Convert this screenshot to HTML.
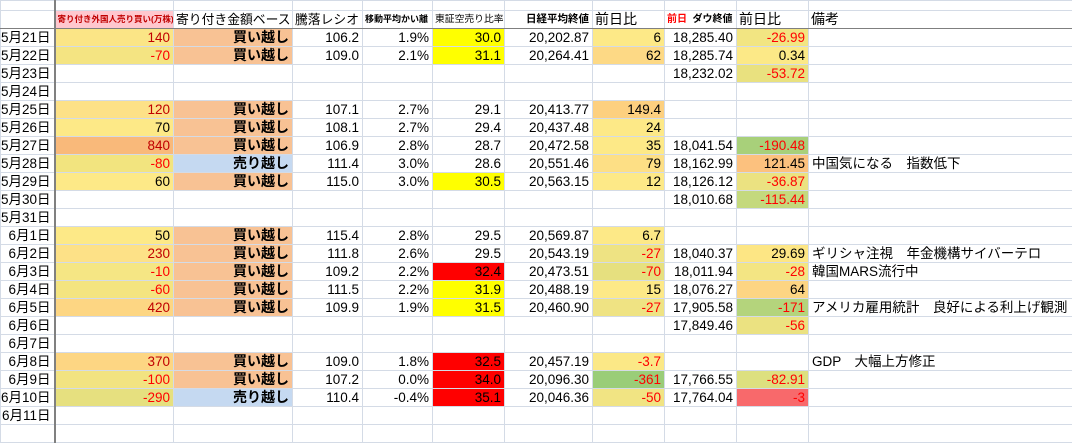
<!DOCTYPE html>
<html><head><meta charset="utf-8"><style>
body{margin:0;width:1072px;height:440px;overflow:hidden;background:#fff;font-family:"Liberation Sans","Noto Sans CJK JP",sans-serif;}
table{border-collapse:collapse;table-layout:fixed;position:absolute;left:0;top:0;width:1072px;}
td{border:1px solid #d4dbe6;padding:0 3px 0 0;height:17px;font-size:13.5px;text-align:right;white-space:nowrap;overflow:hidden;line-height:17px;color:#000;}
tr.t td{height:9px;}
tr.h td{border-bottom:1px solid #7f7f7f;text-align:left;padding:0 0 0 2px;font-size:14px;}
td.d{border-right:2px solid #808080;padding-right:3px;}
.dr{color:#c00000}.r{color:#ff0000}
.b{font-weight:bold;font-size:14px}
.B{background:#f8c294}.S{background:#c5d9f1}.Y{background:#ffff00}.R{background:#ff0000}
td.n{text-align:left;padding-left:3px;overflow:visible}
</style></head><body>
<table>
<colgroup><col style="width:54px"><col style="width:119px"><col style="width:119px"><col style="width:70px"><col style="width:70px"><col style="width:72px"><col style="width:88px"><col style="width:72px"><col style="width:72px"><col style="width:72px"><col style="width:264px"></colgroup>
<tr class="t"><td class="d"></td><td></td><td></td><td></td><td></td><td></td><td></td><td></td><td></td><td></td><td></td></tr>
<tr class="h"><td class="d"></td><td style="background:#ffc7ce;color:#c00000;font-size:8.5px;font-weight:bold">寄り付き外国人売り買い(万株)</td><td style="font-size:12.8px">寄り付き金額ベース</td><td style="font-size:12.8px">騰落レシオ</td><td style="font-size:9px;font-weight:bold">移動平均かい離</td><td style="font-size:9.8px">東証空売り比率</td><td style="font-size:10.5px;font-weight:bold;text-align:right;padding-right:3px">日経平均終値</td><td>前日比</td><td style="font-size:10px;font-weight:bold"><span class="r">前日</span>&nbsp; ダウ終値</td><td>前日比</td><td>備考</td></tr>
<tr><td class="d">5月21日</td><td class="dr" style="background:#fbe586">140</td><td class="B b">買い越し</td><td>106.2</td><td>1.9%</td><td class="Y">30.0</td><td>20,202.87</td><td style="background:#fde987">6</td><td>18,285.40</td><td class="r" style="background:#f2e582">-26.99</td><td class="n"></td></tr>
<tr><td class="d">5月22日</td><td class="r" style="background:#f4e482">-70</td><td class="B b">買い越し</td><td>109.0</td><td>2.1%</td><td class="Y">31.1</td><td>20,264.41</td><td style="background:#fdd985">62</td><td>18,285.74</td><td style="background:#fce987">0.34</td><td class="n"></td></tr>
<tr><td class="d">5月23日</td><td></td><td></td><td></td><td></td><td></td><td></td><td></td><td>18,232.02</td><td class="r" style="background:#e9e17f">-53.72</td><td class="n"></td></tr>
<tr><td class="d">5月24日</td><td></td><td></td><td></td><td></td><td></td><td></td><td></td><td></td><td></td><td class="n"></td></tr>
<tr><td class="d">5月25日</td><td class="dr" style="background:#fde187">120</td><td class="B b">買い越し</td><td>107.1</td><td>2.7%</td><td>29.1</td><td>20,413.77</td><td style="background:#fdd07f">149.4</td><td></td><td></td><td class="n"></td></tr>
<tr><td class="d">5月26日</td><td style="background:#fde987">70</td><td class="B b">買い越し</td><td>108.1</td><td>2.7%</td><td>29.4</td><td>20,437.48</td><td style="background:#fde987">24</td><td></td><td></td><td class="n"></td></tr>
<tr><td class="d">5月27日</td><td class="dr" style="background:#f9b97a">840</td><td class="B b">買い越し</td><td>106.9</td><td>2.8%</td><td>28.7</td><td>20,472.58</td><td style="background:#fde987">35</td><td>18,041.54</td><td class="r" style="background:#a8d07a">-190.48</td><td class="n"></td></tr>
<tr><td class="d">5月28日</td><td class="r" style="background:#f2e47f">-80</td><td class="S b">売り越し</td><td>111.4</td><td>3.0%</td><td>28.6</td><td>20,551.46</td><td style="background:#fddf85">79</td><td>18,162.99</td><td style="background:#fcc17e">121.45</td><td class="n">中国気になる　指数低下</td></tr>
<tr><td class="d">5月29日</td><td style="background:#fde987">60</td><td class="B b">買い越し</td><td>115.0</td><td>3.0%</td><td class="Y">30.5</td><td>20,563.15</td><td style="background:#fde987">12</td><td>18,126.12</td><td class="r" style="background:#ebe281">-36.87</td><td class="n"></td></tr>
<tr><td class="d">5月30日</td><td></td><td></td><td></td><td></td><td></td><td></td><td></td><td>18,010.68</td><td class="r" style="background:#c4d97d">-115.44</td><td class="n"></td></tr>
<tr><td class="d">5月31日</td><td></td><td></td><td></td><td></td><td></td><td></td><td></td><td></td><td></td><td class="n"></td></tr>
<tr><td class="d">6月1日</td><td style="background:#fde987">50</td><td class="B b">買い越し</td><td>115.4</td><td>2.8%</td><td>29.5</td><td>20,569.87</td><td style="background:#fde987">6.7</td><td></td><td></td><td class="n"></td></tr>
<tr><td class="d">6月2日</td><td class="dr" style="background:#fde187">230</td><td class="B b">買い越し</td><td>111.8</td><td>2.6%</td><td>29.5</td><td>20,543.19</td><td class="r" style="background:#eee383">-27</td><td>18,040.37</td><td style="background:#fde684">29.69</td><td class="n">ギリシャ注視　年金機構サイバーテロ</td></tr>
<tr><td class="d">6月3日</td><td class="r" style="background:#f5e684">-10</td><td class="B b">買い越し</td><td>109.2</td><td>2.2%</td><td class="R">32.4</td><td>20,473.51</td><td class="r" style="background:#e6e07f">-70</td><td>18,011.94</td><td class="r" style="background:#f3e583">-28</td><td class="n">韓国MARS流行中</td></tr>
<tr><td class="d">6月4日</td><td class="r" style="background:#f4e480">-60</td><td class="B b">買い越し</td><td>111.5</td><td>2.2%</td><td class="Y">31.9</td><td>20,488.19</td><td style="background:#fde987">15</td><td>18,076.27</td><td style="background:#fdd583">64</td><td class="n"></td></tr>
<tr><td class="d">6月5日</td><td class="dr" style="background:#fdd683">420</td><td class="B b">買い越し</td><td>109.9</td><td>1.9%</td><td class="Y">31.5</td><td>20,460.90</td><td class="r" style="background:#efe383">-27</td><td>17,905.58</td><td class="r" style="background:#b4d47c">-171</td><td class="n">アメリカ雇用統計　良好による利上げ観測</td></tr>
<tr><td class="d">6月6日</td><td></td><td></td><td></td><td></td><td></td><td></td><td></td><td>17,849.46</td><td class="r" style="background:#ebe281">-56</td><td class="n"></td></tr>
<tr><td class="d">6月7日</td><td></td><td></td><td></td><td></td><td></td><td></td><td></td><td></td><td></td><td class="n"></td></tr>
<tr><td class="d">6月8日</td><td class="dr" style="background:#fdd683">370</td><td class="B b">買い越し</td><td>109.0</td><td>1.8%</td><td class="R">32.5</td><td>20,457.19</td><td class="r" style="background:#fbe886">-3.7</td><td></td><td></td><td class="n">GDP　大幅上方修正</td></tr>
<tr><td class="d">6月9日</td><td class="r" style="background:#f2e381">-100</td><td class="B b">買い越し</td><td>107.2</td><td>0.0%</td><td class="R">34.0</td><td>20,096.30</td><td class="r" style="background:#9acd78">-361</td><td>17,766.55</td><td class="r" style="background:#dde07f">-82.91</td><td class="n"></td></tr>
<tr><td class="d">6月10日</td><td class="r" style="background:#e6e07f">-290</td><td class="S b">売り越し</td><td>110.4</td><td>-0.4%</td><td class="R">35.1</td><td>20,046.36</td><td class="r" style="background:#f1e483">-50</td><td>17,764.04</td><td class="r" style="background:#f8696b">-3</td><td class="n"></td></tr>
<tr><td class="d">6月11日</td><td></td><td></td><td></td><td></td><td></td><td></td><td></td><td></td><td></td><td class="n"></td></tr>
<tr><td class="d"></td><td></td><td></td><td></td><td></td><td></td><td></td><td></td><td></td><td></td><td class="n"></td></tr>
</table>
</body></html>
